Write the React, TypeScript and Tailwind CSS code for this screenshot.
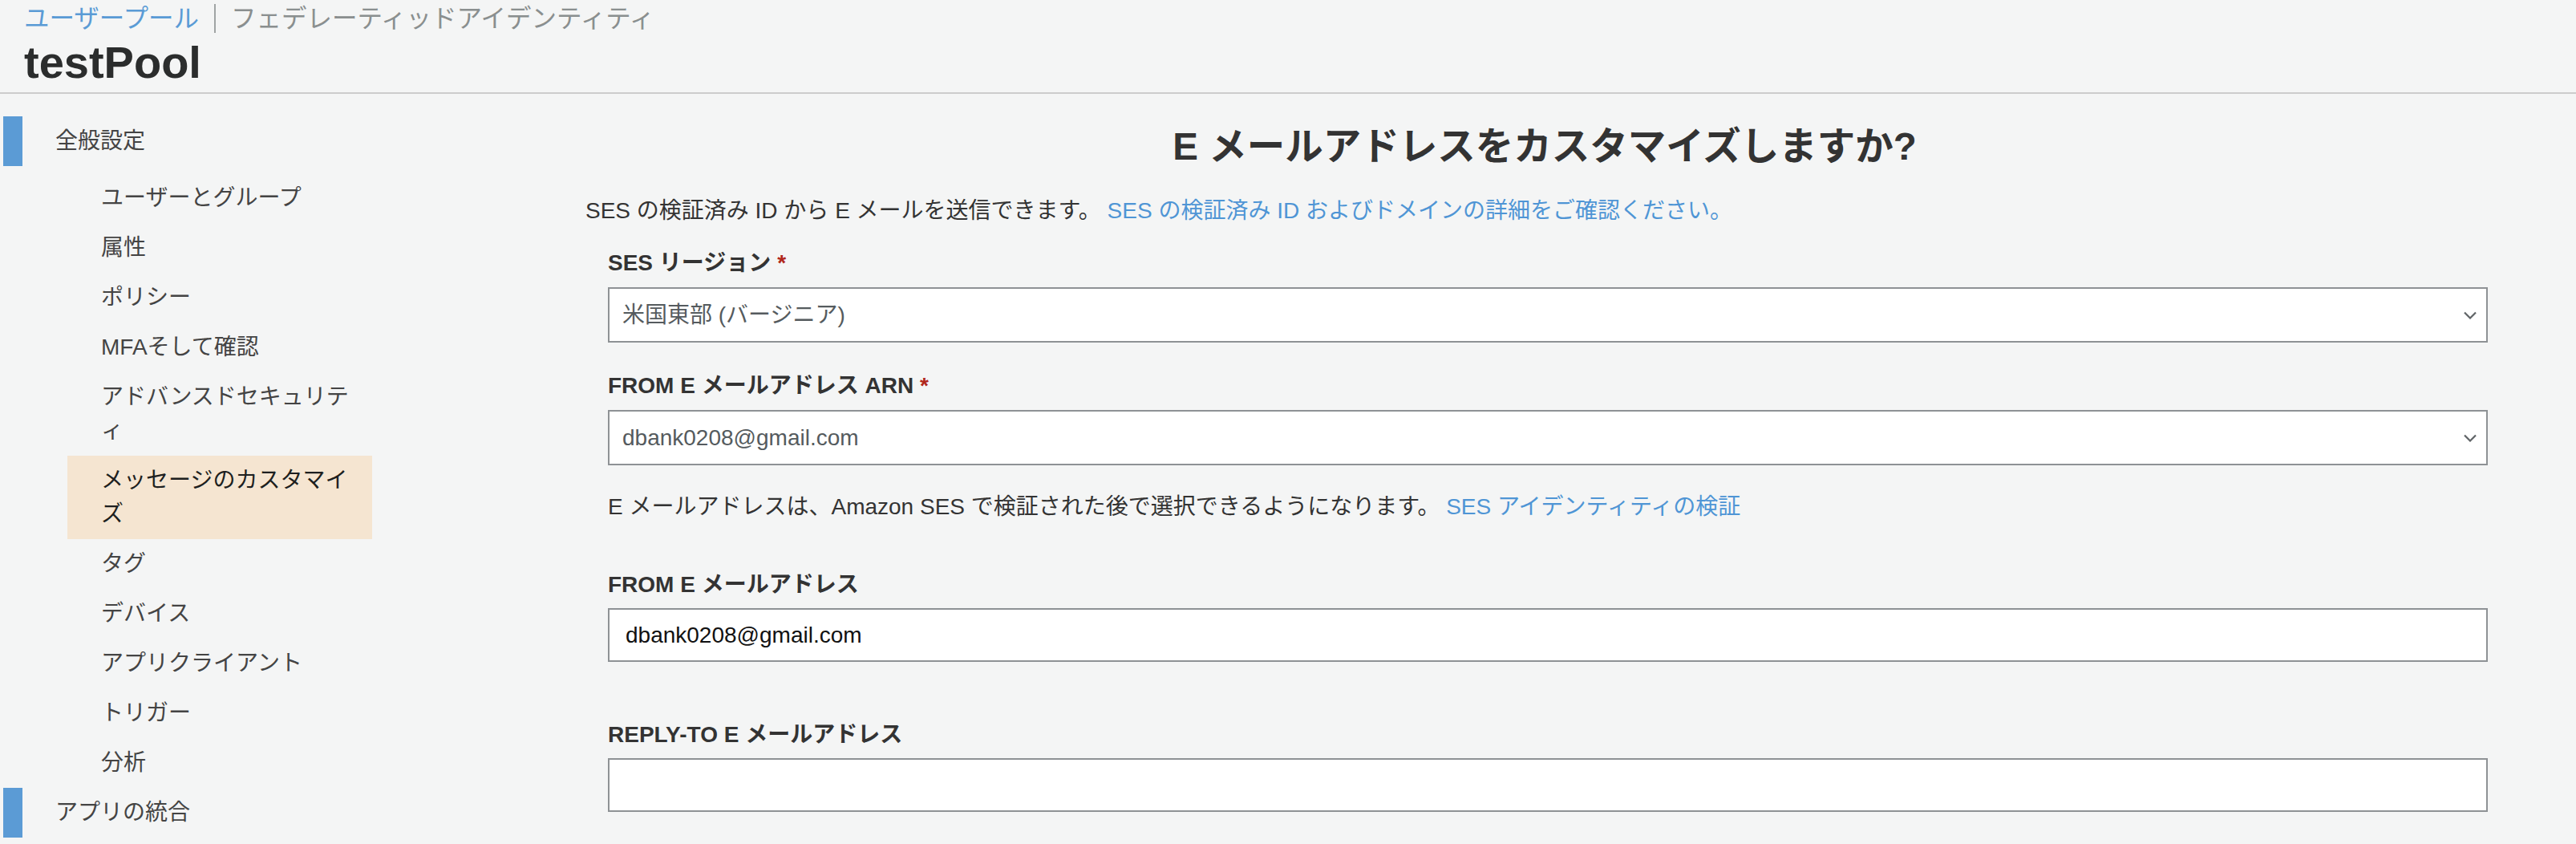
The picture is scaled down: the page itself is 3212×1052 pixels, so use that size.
import React from "react";

const subItems: { label: string; active?: boolean }[] = [
  { label: "ユーザーとグループ" },
  { label: "属性" },
  { label: "ポリシー" },
  { label: "MFAそして確認" },
  { label: "アドバンスドセキュリティ" },
  { label: "メッセージのカスタマイズ", active: true },
  { label: "タグ" },
  { label: "デバイス" },
  { label: "アプリクライアント" },
  { label: "トリガー" },
  { label: "分析" },
];

function GroupHeader({ label }: { label: string }) {
  return (
    <div className="flex items-stretch">
      <div className="ml-[4px] w-[24px] shrink-0 bg-[#5b9bd5]" />
      <div className="pl-[41px] py-[10px] leading-[42px] text-[#444444]">{label}</div>
    </div>
  );
}

function Chevron() {
  return (
    <svg width="16" height="10" viewBox="0 0 16 10" fill="none" className="shrink-0">
      <polyline points="1,1.5 8,8.5 15,1.5" stroke="#5f6366" strokeWidth="2.2" fill="none" />
    </svg>
  );
}

function SelectBox({ value }: { value: string }) {
  return (
    <div className="mt-[9px] flex h-[69px] items-center justify-between border-2 border-[#8e9295] bg-white pl-[16px] pr-[12px]">
      <span className="text-[28px] text-[#555b5e]">{value}</span>
      <Chevron />
    </div>
  );
}

function Label({ text, required, className }: { text: string; required?: boolean; className: string }) {
  return (
    <div className={`${className} text-[28px] leading-[42px] font-bold text-[#333333]`}>
      {text}
      {required && <span className="ml-[8px] text-[#b0271b]">*</span>}
    </div>
  );
}

export default function App() {
  return (
    <div className="min-h-screen w-full bg-[#f4f5f5] font-['Liberation_Sans','Noto_Sans_CJK_JP',sans-serif] [line-break:loose]">
      <header className="border-b-2 border-[#cccccc] px-[30px] pt-[3px] pb-[5px]">
        <div className="flex h-[40px] items-center text-[31.5px] leading-[40px]">
          <span className="text-[#5a9bd5]">ユーザープール</span>
          <span className="mx-[19px] h-[36px] w-[2px] bg-[#a0a4a4]" />
          <span className="text-[#8a8f8f]">フェデレーティッドアイデンティティ</span>
        </div>
        <h1 className="mt-[3px] text-[56px] leading-[64px] font-bold text-[#2b2d2d]">testPool</h1>
      </header>

      <div className="flex">
        <nav className="w-[470px] shrink-0 pt-[28px] text-[28px]">
          <GroupHeader label="全般設定" />
          <ul className="mt-[9px] ml-[84px] w-[380px]">
            {subItems.map((it) => (
              <li
                key={it.label}
                className={
                  it.active
                    ? "bg-[#f5e5d1] pl-[42px] pr-[20px] py-[10px] leading-[42px] text-[#1d1f20]"
                    : "pl-[42px] pr-[20px] py-[10px] leading-[42px] text-[#444444]"
                }
              >
                {it.label}
              </li>
            ))}
          </ul>
          <GroupHeader label="アプリの統合" />
        </nav>

        <main className="min-w-0 flex-1 pl-[260px] pr-[82px] pt-[37px] pb-[20px]">
          <h2 className="pr-[8px] text-center text-[47.5px] leading-[58px] font-bold text-[#333333]">
            E メールアドレスをカスタマイズしますか?
          </h2>
          <p className="mt-[30px] text-[28px] leading-[42px] text-[#333333]">
            SES の検証済み ID から E メールを送信できます。{" "}
            <a className="text-[#4f95d5]">SES の検証済み ID およびドメインの詳細をご確認ください。</a>
          </p>

          <div className="px-[28px]">
            <Label className="mt-[23px]" text="SES リージョン" required />
            <SelectBox value="米国東部 (バージニア)" />

            <Label className="mt-[33px]" text="FROM E メールアドレス ARN" required />
            <SelectBox value="dbank0208@gmail.com" />

            <p className="mt-[31px] text-[28px] leading-[42px] text-[#333333]">
              E メールアドレスは、Amazon SES で検証された後で選択できるようになります。{" "}
              <a className="text-[#4f95d5]">SES アイデンティティの検証</a>
            </p>

            <Label className="mt-[55px]" text="FROM E メールアドレス" />
            <input
              readOnly
              value="dbank0208@gmail.com"
              className="mt-[8px] block h-[67px] w-full border-2 border-[#8e9295] bg-white px-[20px] text-[28px] text-[#111111] outline-none"
            />

            <Label className="mt-[70px]" text="REPLY-TO E メールアドレス" />
            <input
              readOnly
              value=""
              className="mt-[8px] block h-[67px] w-full border-2 border-[#8e9295] bg-white px-[20px] text-[28px] text-[#111111] outline-none"
            />
          </div>
        </main>
      </div>
    </div>
  );
}
